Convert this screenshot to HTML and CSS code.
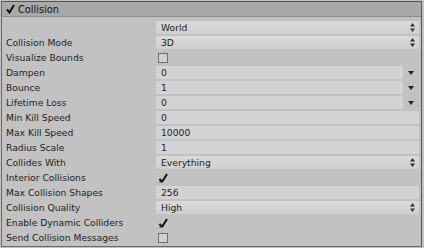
FILE: index.html
```html
<!DOCTYPE html>
<html lang="en">
<head>
    <meta charset="UTF-8">
    <title>Collision</title>
    <link rel="stylesheet" href="styles.css">
</head>
<body>
    <div class="panel">
        <div class="header">
            <svg class="tick" width="9" height="10" viewBox="0 0 9 10"><path d="M1 5.5L3.5 8.5L8 1" fill="none" stroke="#111" stroke-width="2"/></svg>
            <span class="title">Collision</span>
        </div>
        <div class="rows">
            <div class="row">
                <span class="label"></span>
                <div class="popup">World<svg class="arrows" width="5" height="9" viewBox="0 0 5 9"><path d="M2.5 0L5 3.5H0Z M0 5.5H5L2.5 9Z" fill="#333"/></svg></div>
            </div>
            <div class="row">
                <span class="label">Collision Mode</span>
                <div class="popup">3D<svg class="arrows" width="5" height="9" viewBox="0 0 5 9"><path d="M2.5 0L5 3.5H0Z M0 5.5H5L2.5 9Z" fill="#333"/></svg></div>
            </div>
            <div class="row">
                <span class="label">Visualize Bounds</span>
                <div class="check"></div>
            </div>
            <div class="row">
                <span class="label">Dampen</span>
                <div class="curve"><div class="input">0</div><svg class="drop" width="6" height="4" viewBox="0 0 6 4"><path d="M0 0H6L3 4Z" fill="#222"/></svg></div>
            </div>
            <div class="row">
                <span class="label">Bounce</span>
                <div class="curve"><div class="input">1</div><svg class="drop" width="6" height="4" viewBox="0 0 6 4"><path d="M0 0H6L3 4Z" fill="#222"/></svg></div>
            </div>
            <div class="row">
                <span class="label">Lifetime Loss</span>
                <div class="curve"><div class="input">0</div><svg class="drop" width="6" height="4" viewBox="0 0 6 4"><path d="M0 0H6L3 4Z" fill="#222"/></svg></div>
            </div>
            <div class="row">
                <span class="label">Min Kill Speed</span>
                <div class="input">0</div>
            </div>
            <div class="row">
                <span class="label">Max Kill Speed</span>
                <div class="input">10000</div>
            </div>
            <div class="row">
                <span class="label">Radius Scale</span>
                <div class="input">1</div>
            </div>
            <div class="row">
                <span class="label">Collides With</span>
                <div class="popup">Everything<svg class="arrows" width="5" height="9" viewBox="0 0 5 9"><path d="M2.5 0L5 3.5H0Z M0 5.5H5L2.5 9Z" fill="#333"/></svg></div>
            </div>
            <div class="row">
                <span class="label">Interior Collisions</span>
                <svg class="checked" width="10" height="10" viewBox="0 0 10 10"><path d="M1.5 6L4 9L9 1" fill="none" stroke="#111" stroke-width="2"/><path d="M1 9.5H5" stroke="#777" stroke-width="1"/></svg>
            </div>
            <div class="row">
                <span class="label">Max Collision Shapes</span>
                <div class="input">256</div>
            </div>
            <div class="row">
                <span class="label">Collision Quality</span>
                <div class="popup">High<svg class="arrows" width="5" height="9" viewBox="0 0 5 9"><path d="M2.5 0L5 3.5H0Z M0 5.5H5L2.5 9Z" fill="#333"/></svg></div>
            </div>
            <div class="row">
                <span class="label">Enable Dynamic Colliders</span>
                <svg class="checked" width="10" height="10" viewBox="0 0 10 10"><path d="M1.5 6L4 9L9 1" fill="none" stroke="#111" stroke-width="2"/><path d="M1 9.5H5" stroke="#777" stroke-width="1"/></svg>
            </div>
            <div class="row">
                <span class="label">Send Collision Messages</span>
                <div class="check"></div>
            </div>
        </div>
    </div>
</body>
</html>
```

FILE: styles.css
```css
body {
    margin: 0;
    background: #c2c2c2;
    font-family: 'DejaVu Sans', sans-serif;
    font-size: 9.2px;
    color: #1e1e1e;
}
.panel {
    margin: 1px 2px 0 1px;
    height: 246px;
    box-sizing: border-box;
    border: 1px solid #6a6a6a;
    border-top-color: #555;
    border-right-color: #555;
    background: #c2c2c2;
}
.header {
    height: 14px;
    background: #a9a9a9;
    border-bottom: 1px solid #8e8e8e;
    display: flex;
    align-items: center;
    padding-left: 4px;
    font-size: 9.8px;
    color: #111;
}
.tick {
    margin-right: 3px;
}
.rows {
    padding: 3px 2px 0 4px;
}
.row {
    height: 15px;
    display: grid;
    grid-template-columns: 150px 1fr;
    align-items: center;
}
.label {
    white-space: nowrap;
}
.popup,
.input {
    height: 13px;
    line-height: 13px;
    padding-left: 5px;
    border-radius: 2px;
}
.popup {
    background: linear-gradient(#dadada, #cfcfcf);
    display: flex;
    justify-content: space-between;
    align-items: center;
    padding-right: 4px;
}
.input {
    background: #d3d3d3;
}
.curve {
    display: flex;
    align-items: center;
}
.curve .input {
    flex: 1;
}
.drop {
    margin: 0 5px 0 5px;
}
.check {
    width: 8px;
    height: 8px;
    margin-left: 2px;
    border: 1px solid #6e6e6e;
    background: #cfcfcf;
}
.checked {
    margin-left: 2px;
}
```
